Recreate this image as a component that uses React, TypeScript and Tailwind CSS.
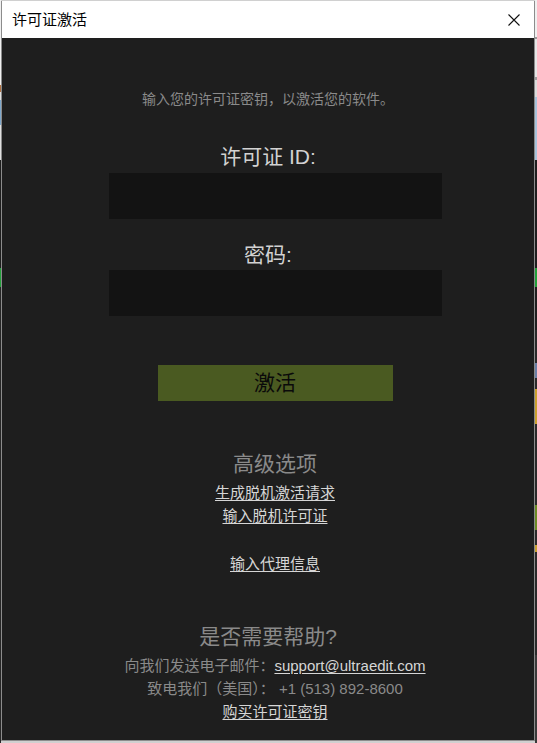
import React from "react";

const rightSegs: [number, string][] = [
  [37, "#f0f0f0"],
  [2, "#9a9a9a"],
  [38, "#e6e6e6"],
  [3, "#a0a0a0"],
  [17, "#dcdcdc"],
  [63, "#a8c4dc"],
  [108, "#1e1e1e"],
  [19, "#22a03a"],
  [43, "#1e1e1e"],
  [33, "#2a2a2a"],
  [15, "#6b7fa6"],
  [11, "#2a2a2a"],
  [35, "#c9a12f"],
  [81, "#2a2a2a"],
  [25, "#6b8a24"],
  [15, "#2a2a2a"],
  [7, "#c8a030"],
  [103, "#2a2a2a"],
  [88, "#3a3a3a"],
];

const leftSegs: [number, string][] = [
  [85, "#f0f0f0"],
  [7, "#b07040"],
  [8, "#e0e0e0"],
  [25, "#7fa8cc"],
  [35, "#e0e0e0"],
  [108, "#1e1e1e"],
  [19, "#22a03a"],
  [456, "#262626"],
];

function Strip({ segs, w }: { segs: [number, string][]; w: string }) {
  return (
    <div className={`flex flex-col ${w}`}>
      {segs.map(([h, c], i) => (
        <div key={i} className="w-full shrink-0" style={{ height: h, background: c }} />
      ))}
    </div>
  );
}

export default function App() {
  return (
    <div className="w-[537px] h-[743px] bg-[#d0d0d0] flex overflow-hidden font-['Liberation_Sans','Noto_Sans_CJK_SC',sans-serif]">
      <Strip segs={leftSegs} w="w-[1px]" />
      <div className="flex flex-col pt-[1px]">
        <div className="w-[534px] h-[740px] flex flex-col border-x border-b border-[#8c8c8c]">
          {/* Title bar */}
          <div className="h-[37px] bg-white flex items-center justify-between pl-[10px] pr-[14px]">
            <span className="text-[15px] leading-[20px] text-black">许可证激活</span>
            <svg width="12" height="12" viewBox="0 0 12 12" className="block">
              <path d="M0.5 0.5 L11.5 11.5 M11.5 0.5 L0.5 11.5" stroke="#111" strokeWidth="1.1" fill="none" />
            </svg>
          </div>
          {/* Body */}
          <div className="flex-1 bg-[#1e1e1e] flex flex-col items-center pt-[51px]">
            <div className="text-[14px] leading-[20px] text-[#8a8a8a]">输入您的许可证密钥，以激活您的软件。</div>

            <div className="mt-[34px] text-[21px] leading-[28px] text-[#d2d2d2]">许可证 ID:</div>
            <div className="mt-[2px] ml-[14px] w-[333px] h-[46px] bg-[#131313]" />

            <div className="mt-[22px] text-[21px] leading-[28px] text-[#d2d2d2]">密码:</div>
            <div className="mt-[1px] ml-[14px] w-[333px] h-[46px] bg-[#131313]" />

            <button className="mt-[49px] ml-[14px] w-[235px] h-[36px] bg-[#4a5a21] text-[21px] leading-[28px] text-[#0a0a0a] flex items-center justify-center">
              激活
            </button>

            <div className="mt-[49px] ml-[14px] text-[21px] leading-[28px] text-[#8a8a8a]">高级选项</div>
            <a className="mt-[3px] ml-[14px] text-[15px] leading-[23px] text-[#d6d6d6] underline underline-offset-[2px]">生成脱机激活请求</a>
            <a className="ml-[14px] text-[15px] leading-[23px] text-[#d6d6d6] underline underline-offset-[2px]">输入脱机许可证</a>
            <a className="mt-[25px] ml-[14px] text-[15px] leading-[23px] text-[#d6d6d6] underline underline-offset-[2px]">输入代理信息</a>

            <div className="mt-[48px] text-[21px] leading-[28px] text-[#8a8a8a]">是否需要帮助?</div>
            <div className="mt-[3px] ml-[14px] text-[15px] leading-[23px] text-[#8a8a8a]">
              向我们发送电子邮件：
              <a className="text-[#d6d6d6] underline underline-offset-[2px]">support@ultraedit.com</a>
            </div>
            <div className="ml-[14px] text-[15px] leading-[23px] text-[#8a8a8a]">致电我们（美国）： +1 (513) 892-8600</div>
            <a className="ml-[14px] text-[15px] leading-[23px] text-[#d6d6d6] underline underline-offset-[2px]">购买许可证密钥</a>
          </div>
        </div>
      </div>
      <Strip segs={rightSegs} w="w-[2px]" />
    </div>
  );
}
